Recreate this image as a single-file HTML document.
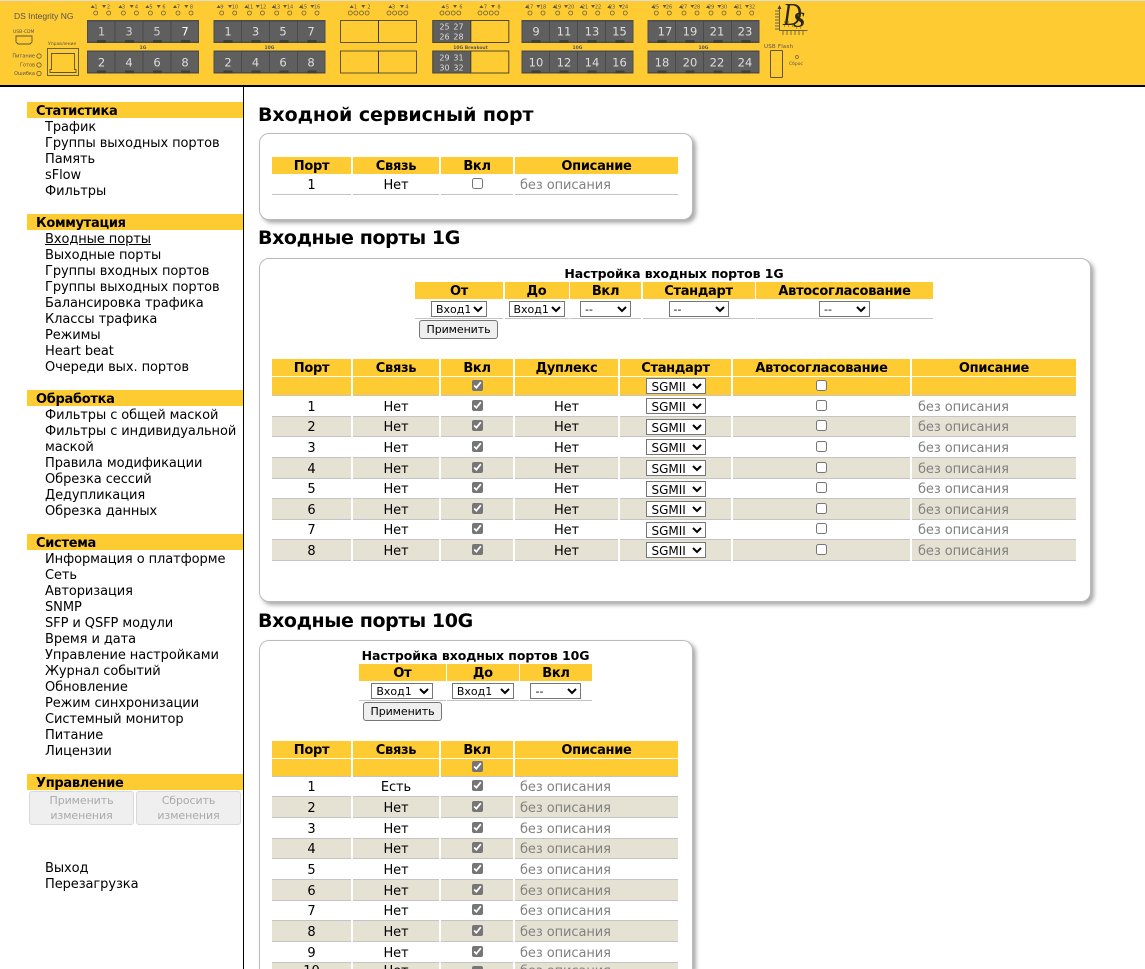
<!DOCTYPE html>
<html lang="ru"><head><meta charset="utf-8"><title>DS Integrity NG</title>
<style>
html,body{margin:0;padding:0;background:#fff;width:1145px;height:969px;overflow:hidden}
#w{position:absolute;left:0;top:0;width:1145px;height:969px;overflow:hidden;font:13px/16px "DejaVu Sans","Liberation Sans",sans-serif;color:#000;letter-spacing:-.08px}
svg{position:absolute;left:0;top:0;letter-spacing:0}
svg text{font-family:"DejaVu Sans","Liberation Sans",sans-serif;fill:#555}
.top{position:absolute;left:0;top:0;width:1145px;height:85px;background:#ffcb33;border-top:1px solid #ddd;box-sizing:border-box}
.hl{position:absolute;left:0;top:85px;width:1145px;height:2px;background:#000}
.vl{position:absolute;left:243px;top:87px;width:1px;height:882px;background:#000}
.nh{position:absolute;left:27px;width:216px;height:16px;background:#ffcb33;font-weight:bold;font-size:13px;line-height:20px;padding-left:9px;box-sizing:border-box;letter-spacing:-.3px;overflow:hidden}
.nl{position:absolute;left:45px;white-space:nowrap;line-height:16px;font-size:13px}
.nb{position:absolute;top:791px;height:34px;background:#efefef;border:1px solid #d9d9d9;border-radius:3px;box-sizing:border-box;color:#aaa;font-size:11px;line-height:14.5px;text-align:center;padding-top:2px}
h2{position:absolute;left:258px;margin:0;font-size:19px;line-height:24px;font-weight:bold;white-space:nowrap;letter-spacing:-.05px}
.box{position:absolute;left:259px;background:#fff;border:1px solid #bbb;border-radius:10px;box-shadow:3px 3px 4px #aaa;box-sizing:border-box}
.ti{position:absolute;font-weight:bold;font-size:12.5px;line-height:16px;text-align:center;white-space:nowrap}
.r{position:absolute;display:grid;column-gap:2px}
.a{left:272px;width:406px;grid-template-columns:79px 86px 72px 163px}
.b{left:272px;width:804px;grid-template-columns:79px 86px 72px 103px 111px 177px 164px}
.c{left:415px;width:518px;grid-template-columns:88px 64px 71px 112px 177px;column-gap:1.5px}
.e{left:359px;width:233px;grid-template-columns:86.7px 72.3px 72px;column-gap:1px}
.r>div{display:flex;align-items:center;justify-content:center;box-sizing:border-box;border-bottom:1px solid #c4c4c4;min-width:0;padding-top:3px}
.r.h>div{background:#ffcb33;border:0;font-weight:bold;font-size:13px;padding-top:3px;line-height:14px;letter-spacing:-.3px}
.y>div{background:#ffcb33;border-bottom:1px solid #c4c4c4}
.z>div{background:#e6e2d3}
.r>.d{justify-content:flex-start;padding-left:6px;color:#808080}
.a>.d{padding-left:5px}
.r.l{grid-template-rows:6px;height:6px;overflow:hidden}
.r.l>div{height:6px;overflow:hidden;border:0;padding-top:1px;align-items:flex-start}
.cb{width:11px;height:3px;margin-top:2px;background:#767676;border-radius:2px 2px 0 0}
input{width:11px;height:11px;margin:-5px 0 0 0;accent-color:#767676}
select{font:11px "DejaVu Sans","Liberation Sans",sans-serif;height:16px;padding:0;margin-top:-3px;background:#fff;border:1px solid #767676;border-radius:0;color:#000;box-sizing:border-box}
.s{width:60px;font-size:12px;padding-left:1px}
.btn{position:absolute;height:19px;width:79px;background:#efefef;border:1px solid #767676;border-radius:3px;box-sizing:border-box;text-align:center;font-size:11px;line-height:17px;color:#000}
</style></head><body><div id="w">
<div class="top"></div>
<svg width="1145" height="86" viewBox="0 0 1145 86">
<defs>
<g id="led"><path d="M-5 8l2-3 2 3zM6.300 5h4l-2 3z" fill="#5a5a40"/><circle cx="0" cy="13" r="2" fill="none" stroke="#6b6238" stroke-width=".8"/><circle cx="13" cy="13" r="2" fill="none" stroke="#6b6238" stroke-width=".8"/></g>
<g id="four"><path d="M-.6 8l2-3 2 3zM11 5h4l-2 3z" fill="#5a5a40"/><g fill="none" stroke="#6b6238" stroke-width=".8"><circle cx="0" cy="13" r="2"/><circle cx="5.600" cy="13" r="2"/><circle cx="11.200" cy="13" r="2"/><circle cx="16.800" cy="13" r="2"/></g></g>
<g id="blk"><rect x="0" y="0" width="112" height="23" fill="#5f5f5f"/><rect x="0" y="0" width="112" height="1.500" fill="#4c4c4c"/><rect x="0" y="21.500" width="112" height="1.500" fill="#4c4c4c"/><rect x="0" y="0" width="1" height="23" fill="#4c4c4c"/><rect x="111" y="0" width="1" height="23" fill="#4c4c4c"/><path d="M28 0v23M56 0v23M84 0v23" stroke="#4a4a4a" stroke-width="1"/><path d="M10 20h9v3h-9zM38 20h9v3h-9zM66 20h9v3h-9zM94 20h9v3h-9z" fill="#3e3e3e"/></g>
<g id="emp"><rect x=".5" y=".5" width="76" height="22" fill="#ffcb33" stroke="#5c5530" stroke-width="1"/><path d="M38.500 0v23" stroke="#3c3a28" stroke-width="1"/></g>
<g id="brk"><rect x="0" y="0" width="38.500" height="23" fill="#5f5f5f"/><rect x=".5" y=".5" width="76" height="22" fill="none" stroke="#4c4a30" stroke-width="1"/><path d="M38.500 0v23" stroke="#3c3a28" stroke-width="1"/></g>
</defs>
<text x="14" y="19" font-size="8.500" style="font-family:'Liberation Sans',sans-serif">DS Integrity NG</text>
<text x="13" y="33" font-size="4.500">USB-CDM</text>
<path d="M16 36h16v6l-2 2h-12l-2-2z" fill="none" stroke="#5c5530" stroke-width=".9"/>
<text x="48" y="45" font-size="4.500">Управление</text>
<rect x="47.500" y="48.500" width="31" height="27" fill="none" stroke="#6b6238" stroke-width="1"/>
<path d="M51.500 53.500h23v16h1.500v3h-26v-3h1.500z" fill="none" stroke="#5c5530" stroke-width=".9"/>
<g font-size="5" text-anchor="end"><text x="35" y="57.500">Питание</text><text x="35" y="66.500">Готов</text><text x="35" y="75">Ошибка</text></g>
<g fill="none" stroke="#6b6238" stroke-width=".8"><circle cx="39" cy="56" r="2.200"/><circle cx="39" cy="65" r="2.200"/><circle cx="39" cy="73.500" r="2.200"/></g>

<use href="#led" x="95.700"/><use href="#led" x="123.400"/><use href="#led" x="150.400"/><use href="#led" x="178"/>
<use href="#led" x="221.700"/><use href="#led" x="249.400"/><use href="#led" x="276.700"/><use href="#led" x="304"/>
<use href="#led" x="530"/><use href="#led" x="557.700"/><use href="#led" x="584.700"/><use href="#led" x="612.300"/>
<use href="#led" x="656.300"/><use href="#led" x="684"/><use href="#led" x="711"/><use href="#led" x="738.700"/>
<use href="#four" x="350.300"/><use href="#four" x="389"/><use href="#four" x="442"/><use href="#four" x="480"/>
<g font-size="5" text-anchor="middle">
<text x="96" y="8.500">1</text><text x="108.500" y="8.500">2</text><text x="123.500" y="8.500">3</text><text x="136.500" y="8.500">4</text><text x="151" y="8.500">5</text><text x="164" y="8.500">6</text><text x="178.500" y="8.500">7</text><text x="191.500" y="8.500">8</text>
<text x="222" y="8.500">9</text><text x="235" y="8.500">10</text><text x="250" y="8.500">11</text><text x="263" y="8.500">12</text><text x="277" y="8.500">13</text><text x="290" y="8.500">14</text><text x="304" y="8.500">15</text><text x="317" y="8.500">16</text>
<text x="355.500" y="8.500">1</text><text x="369" y="8.500">2</text><text x="393.500" y="8.500">3</text><text x="407" y="8.500">4</text>
<text x="447.500" y="8.500">5</text><text x="461" y="8.500">6</text><text x="485.500" y="8.500">7</text><text x="499" y="8.500">8</text>
<text x="530" y="8.500">17</text><text x="543" y="8.500">18</text><text x="558" y="8.500">19</text><text x="571" y="8.500">20</text><text x="585" y="8.500">21</text><text x="598" y="8.500">22</text><text x="612" y="8.500">23</text><text x="625" y="8.500">24</text>
<text x="656" y="8.500">25</text><text x="669" y="8.500">26</text><text x="684" y="8.500">27</text><text x="697" y="8.500">28</text><text x="711" y="8.500">29</text><text x="724" y="8.500">30</text><text x="739" y="8.500">31</text><text x="752" y="8.500">32</text>
</g>

<use href="#blk" x="87" y="20"/><use href="#blk" x="87" y="50.500"/>
<use href="#blk" x="213.500" y="20"/><use href="#blk" x="213.500" y="50.500"/>
<use href="#emp" x="340" y="20"/><use href="#emp" x="340" y="50.500"/>
<use href="#brk" x="432.300" y="20"/><use href="#brk" x="432.300" y="50.500"/>
<use href="#blk" x="521.500" y="20"/><use href="#blk" x="521.500" y="50.500"/>
<use href="#blk" x="647.500" y="20"/><use href="#blk" x="647.500" y="50.500"/>

<g font-size="11.500" text-anchor="middle">
<text x="101.500" y="35.500" style="fill:#ccc">1</text><text x="129" y="35.500" style="fill:#ccc">3</text><text x="157" y="35.500" style="fill:#ccc">5</text><text x="185" y="35.500" style="fill:#fff">7</text>
<text x="101.500" y="66.500" style="fill:#ddd">2</text><text x="129" y="66.500" style="fill:#ddd">4</text><text x="157" y="66.500" style="fill:#ddd">6</text><text x="185" y="66.500" style="fill:#ddd">8</text>
<text x="228" y="35.500" style="fill:#ddd">1</text><text x="255.500" y="35.500" style="fill:#ddd">3</text><text x="283" y="35.500" style="fill:#ddd">5</text><text x="311" y="35.500" style="fill:#ddd">7</text>
<text x="228" y="66.500" style="fill:#ddd">2</text><text x="255.500" y="66.500" style="fill:#ddd">4</text><text x="283" y="66.500" style="fill:#ddd">6</text><text x="311" y="66.500" style="fill:#ddd">8</text>
<text x="536" y="35.500" style="fill:#ddd">9</text><text x="564" y="35.500" style="fill:#ddd">11</text><text x="592" y="35.500" style="fill:#ddd">13</text><text x="619.500" y="35.500" style="fill:#ddd">15</text>
<text x="536" y="66.500" style="fill:#ddd">10</text><text x="564" y="66.500" style="fill:#ddd">12</text><text x="592" y="66.500" style="fill:#ddd">14</text><text x="619.500" y="66.500" style="fill:#ddd">16</text>
<text x="665" y="35.500" style="fill:#ddd">17</text><text x="690" y="35.500" style="fill:#ddd">19</text><text x="717" y="35.500" style="fill:#ddd">21</text><text x="745" y="35.500" style="fill:#ddd">23</text>
<text x="662" y="66.500" style="fill:#ddd">18</text><text x="690" y="66.500" style="fill:#ddd">20</text><text x="717" y="66.500" style="fill:#ddd">22</text><text x="745" y="66.500" style="fill:#ddd">24</text>
</g>
<g font-size="8" text-anchor="middle">
<text x="444.500" y="29.500" style="fill:#ddd">25</text><text x="458.500" y="29.500" style="fill:#ddd">27</text>
<text x="444.500" y="39.500" style="fill:#ddd">26</text><text x="458.500" y="39.500" style="fill:#ddd">28</text>
<text x="444.500" y="60.500" style="fill:#ddd">29</text><text x="458.500" y="60.500" style="fill:#ddd">31</text>
<text x="444.500" y="70.500" style="fill:#ddd">30</text><text x="458.500" y="70.500" style="fill:#ddd">32</text>
</g>
<g font-size="4.500" font-weight="bold" text-anchor="middle">
<text x="143" y="49">1G</text><text x="269.500" y="49">10G</text><text x="470.500" y="49">10G Breakout</text><text x="577.500" y="49">10G</text><text x="703.500" y="49">10G</text>
</g>
<path d="M779.500 8v22.500h28" fill="none" stroke="#6b6238" stroke-width="1"/><path d="M777.500 9l2-4 2 4z" fill="#444"/>
<path d="M775 11h5M775 14h5M775 17h5M775 20h5M775 23h5M775 26h5M775 29h5M783 31v4M787 31v4M791 31v4M795 31v4M799 31v4M803 31v4" stroke="#6b6238" stroke-width=".9"/>
<path d="M784 22h1M788 22h1M784 26h1M788 26h1M792 26h1M796 28h1M800 28h1" stroke="#6b6238" stroke-width="1"/>
<text transform="translate(783,25) scale(.8,1)" font-size="32" font-style="italic" style="font-family:'Liberation Serif',serif;fill:#2a2614">D</text>
<text x="793" y="27" font-size="22" font-style="italic" font-weight="bold" style="font-family:'Liberation Serif',serif;fill:#2a2614">S</text>
<text x="764" y="48" font-size="5.500" letter-spacing=".2">USB Flash</text>
<rect x="770.500" y="50.500" width="12" height="27" rx="1" fill="none" stroke="#5c5530" stroke-width="1"/>
<circle cx="797" cy="57" r="1.500" fill="none" stroke="#6b6238" stroke-width=".7"/>
<text x="796" y="65" font-size="4.500" text-anchor="middle">Сброс</text>
</svg>
<div class="hl"></div><div class="vl"></div>

<div class="nh" style="top:102px">Статистика</div>
<div class="nl" style="top:120px">Трафик<br>Группы выходных портов<br>Память<br>sFlow<br>Фильтры</div>
<div class="nh" style="top:214px">Коммутация</div>
<div class="nl" style="top:232px"><u>Входные порты</u><br>Выходные порты<br>Группы входных портов<br>Группы выходных портов<br>Балансировка трафика<br>Классы трафика<br>Режимы<br>Heart beat<br>Очереди вых. портов</div>
<div class="nh" style="top:390px">Обработка</div>
<div class="nl" style="top:408px">Фильтры с общей маской<br>Фильтры с индивидуальной<br>маской<br>Правила модификации<br>Обрезка сессий<br>Дедупликация<br>Обрезка данных</div>
<div class="nh" style="top:534px">Система</div>
<div class="nl" style="top:552px">Информация о платформе<br>Сеть<br>Авторизация<br>SNMP<br>SFP и QSFP модули<br>Время и дата<br>Управление настройками<br>Журнал событий<br>Обновление<br>Режим синхронизации<br>Системный монитор<br>Питание<br>Лицензии</div>
<div class="nh" style="top:774px">Управление</div>
<div class="nb" style="left:29px;width:105px">Применить<br>изменения</div>
<div class="nb" style="left:136px;width:105px">Сбросить<br>изменения</div>
<div class="nl" style="top:861px">Выход<br>Перезагрузка</div>

<h2 style="top:103px">Входной сервисный порт</h2>
<div class="box" style="top:133px;width:434px;height:87px"></div>
<div class="r a h" style="top:157px;height:17px"><div>Порт</div><div>Связь</div><div>Вкл</div><div>Описание</div></div>
<div class="r a" style="top:175px;height:20px"><div>1</div><div>Нет</div><div><input type="checkbox"></div><div class="d">без описания</div></div>

<h2 style="top:226px;letter-spacing:-.4px">Входные порты 1G</h2>
<div class="box" style="top:258px;width:832px;height:344px"></div>
<div class="ti" style="left:415px;width:518px;top:266px">Настройка входных портов 1G</div>
<div class="r c h" style="top:282px;height:17px"><div>От</div><div>До</div><div>Вкл</div><div>Стандарт</div><div>Автосогласование</div></div>
<div class="r c" style="top:299px;height:20px"><div><select style="width:56px"><option>Вход1</option></select></div><div><select style="width:56px"><option>Вход1</option></select></div><div><select style="width:51px"><option>--</option></select></div><div><select style="width:60px"><option>--</option></select></div><div><select style="width:51px"><option>--</option></select></div></div>
<div class="btn" style="left:419px;top:320px">Применить</div>

<div class="r b h" style="top:359px;height:17px"><div>Порт</div><div>Связь</div><div>Вкл</div><div>Дуплекс</div><div>Стандарт</div><div>Автосогласование</div><div>Описание</div></div>
<div class="r b y" style="top:377px;height:19px"><div></div><div></div><div><input type="checkbox" checked></div><div></div><div><select class="s"><option>SGMII</option></select></div><div><input type="checkbox"></div><div></div></div>
<div class="r b" style="top:396px;height:21px"><div>1</div><div>Нет</div><div><input type="checkbox" checked></div><div>Нет</div><div><select class="s"><option>SGMII</option></select></div><div><input type="checkbox"></div><div class="d">без описания</div></div>
<div class="r b z" style="top:417px;height:20px"><div>2</div><div>Нет</div><div><input type="checkbox" checked></div><div>Нет</div><div><select class="s"><option>SGMII</option></select></div><div><input type="checkbox"></div><div class="d">без описания</div></div>
<div class="r b" style="top:437px;height:21px"><div>3</div><div>Нет</div><div><input type="checkbox" checked></div><div>Нет</div><div><select class="s"><option>SGMII</option></select></div><div><input type="checkbox"></div><div class="d">без описания</div></div>
<div class="r b z" style="top:458px;height:21px"><div>4</div><div>Нет</div><div><input type="checkbox" checked></div><div>Нет</div><div><select class="s"><option>SGMII</option></select></div><div><input type="checkbox"></div><div class="d">без описания</div></div>
<div class="r b" style="top:479px;height:20px"><div>5</div><div>Нет</div><div><input type="checkbox" checked></div><div>Нет</div><div><select class="s"><option>SGMII</option></select></div><div><input type="checkbox"></div><div class="d">без описания</div></div>
<div class="r b z" style="top:499px;height:21px"><div>6</div><div>Нет</div><div><input type="checkbox" checked></div><div>Нет</div><div><select class="s"><option>SGMII</option></select></div><div><input type="checkbox"></div><div class="d">без описания</div></div>
<div class="r b" style="top:520px;height:20px"><div>7</div><div>Нет</div><div><input type="checkbox" checked></div><div>Нет</div><div><select class="s"><option>SGMII</option></select></div><div><input type="checkbox"></div><div class="d">без описания</div></div>
<div class="r b z" style="top:540px;height:21px"><div>8</div><div>Нет</div><div><input type="checkbox" checked></div><div>Нет</div><div><select class="s"><option>SGMII</option></select></div><div><input type="checkbox"></div><div class="d">без описания</div></div>

<h2 style="top:609px;letter-spacing:-.4px">Входные порты 10G</h2>
<div class="box" style="top:640px;width:434px;height:329px;border-bottom:0;border-radius:10px 10px 0 0"></div>
<div class="ti" style="left:359px;width:233px;top:648px">Настройка входных портов 10G</div>
<div class="r e h" style="top:664px;height:17px"><div>От</div><div>До</div><div>Вкл</div></div>
<div class="r e" style="top:681px;height:20px"><div><select style="width:62px"><option>Вход1</option></select></div><div><select style="width:62px"><option>Вход1</option></select></div><div><select style="width:51px"><option>--</option></select></div></div>
<div class="btn" style="left:363px;top:702px">Применить</div>

<div class="r a h" style="top:741px;height:17px"><div>Порт</div><div>Связь</div><div>Вкл</div><div>Описание</div></div>
<div class="r a y" style="top:759px;height:18px"><div></div><div></div><div><input type="checkbox" checked></div><div></div></div>
<div class="r a" style="top:777px;height:20px"><div>1</div><div>Есть</div><div><input type="checkbox" checked></div><div class="d">без описания</div></div>
<div class="r a z" style="top:797px;height:21px"><div>2</div><div>Нет</div><div><input type="checkbox" checked></div><div class="d">без описания</div></div>
<div class="r a" style="top:818px;height:21px"><div>3</div><div>Нет</div><div><input type="checkbox" checked></div><div class="d">без описания</div></div>
<div class="r a z" style="top:839px;height:20px"><div>4</div><div>Нет</div><div><input type="checkbox" checked></div><div class="d">без описания</div></div>
<div class="r a" style="top:859px;height:21px"><div>5</div><div>Нет</div><div><input type="checkbox" checked></div><div class="d">без описания</div></div>
<div class="r a z" style="top:880px;height:21px"><div>6</div><div>Нет</div><div><input type="checkbox" checked></div><div class="d">без описания</div></div>
<div class="r a" style="top:901px;height:20px"><div>7</div><div>Нет</div><div><input type="checkbox" checked></div><div class="d">без описания</div></div>
<div class="r a z" style="top:921px;height:21px"><div>8</div><div>Нет</div><div><input type="checkbox" checked></div><div class="d">без описания</div></div>
<div class="r a" style="top:942px;height:21px"><div>9</div><div>Нет</div><div><input type="checkbox" checked></div><div class="d">без описания</div></div>
<div class="r a z l" style="top:963px"><div>10</div><div>Нет</div><div><div class="cb"></div></div><div class="d">без описания</div></div>
</div></body></html>
